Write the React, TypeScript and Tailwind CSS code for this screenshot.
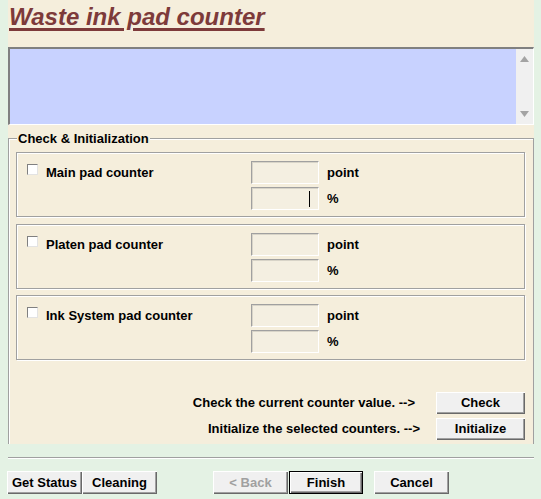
import React from 'react';

const raised =
  'bg-[#f0f0f0] shadow-[inset_1px_1px_0_#ffffff,inset_-1px_-1px_0_#696969,inset_-2px_-2px_0_#a0a0a0]';
const etched = 'border border-[#a0a0a0] shadow-[inset_1px_1px_0_#ffffff,1px_1px_0_#ffffff]';

function Field({ caret = false }: { caret?: boolean }) {
  return (
    <div className="w-[68px] h-[23px] bg-[#f4efe1] border border-t-[#a0a0a0] border-l-[#a0a0a0] border-b-[#ffffff] border-r-[#ffffff] shadow-[inset_1px_1px_0_#d8d4c8] flex items-center justify-end pr-[8px]">
      {caret && <span className="w-[1px] h-[16px] bg-black" />}
    </div>
  );
}

function CounterBox({ label, caret = false, className = '' }: { label: string; caret?: boolean; className?: string }) {
  return (
    <div className={`w-[509px] h-[65px] ${etched} flex pt-[8px] pl-[10px] ${className}`}>
      <div className="w-[224px] flex items-start">
        <span className="mt-[3px] w-[11px] h-[11px] bg-white border border-t-[#808080] border-l-[#808080] border-b-[#e3e3e3] border-r-[#e3e3e3]" />
        <span className="ml-[8px] mt-[4px] text-[13px] leading-[15px] font-bold">{label}</span>
      </div>
      <div className="flex flex-col gap-[3px]">
        <div className="flex items-center">
          <Field />
          <span className="ml-[8px] text-[13px] font-bold">point</span>
        </div>
        <div className="flex items-center">
          <Field caret={caret} />
          <span className="ml-[8px] text-[13px] font-bold">%</span>
        </div>
      </div>
    </div>
  );
}

export default function App() {
  return (
    <div className="w-[541px] h-[499px] bg-[#e4f2e4] font-['Liberation_Sans',Arial,sans-serif] text-black overflow-hidden">
      <div className="ml-[8px] w-[526px] h-[444px] bg-[#f5eedc] flex flex-col">
        <div className="h-[47px] pt-[3px]">
          <h1 className="pl-[1px] text-[24px] leading-[28px] font-bold italic text-[#7d3a3a] underline decoration-[3px] underline-offset-[3px] inline-block">
            Waste ink pad counter
          </h1>
        </div>

        <div className="h-[78px] flex bg-[#c8d2ff] border-t-2 border-l-2 border-t-[#808080] border-l-[#808080] border-b border-r border-b-white border-r-white">
          <div className="flex-1" />
          <div className="w-[17px] bg-[#f0f0f0] flex flex-col items-center justify-between py-[7px]">
            <svg width="9" height="6" viewBox="0 0 9 6">
              <path d="M4.5 0 L9 6 L0 6 Z" fill="#a3a3a3" />
            </svg>
            <svg width="9" height="6" viewBox="0 0 9 6">
              <path d="M0 0 L9 0 L4.5 6 Z" fill="#a3a3a3" />
            </svg>
          </div>
        </div>

        <section className="relative mt-[13px] flex-1 border border-b-0 border-[#a0a0a0] shadow-[inset_1px_1px_0_#ffffff] px-[7px] pt-[13px]">
          <span className="absolute left-[8px] top-[-8px] bg-[#f5eedc] px-[1px] text-[13px] leading-[15px] font-bold">
            Check &amp; Initialization
          </span>
          <div className="flex flex-col">
            <CounterBox label="Main pad counter" caret />
            <CounterBox label="Platen pad counter" className="mt-[7px]" />
            <CounterBox label="Ink System pad counter" className="mt-[6px]" />
          </div>
          <div className="mt-[32px] flex flex-col items-end gap-[4px] pr-[1px]">
            <div className="flex items-center">
              <span className="text-[13px] font-bold">Check the current counter value. --&gt;</span>
              <button className={`ml-[21px] w-[89px] h-[22px] ${raised} text-[13px] font-bold`}>Check</button>
            </div>
            <div className="flex items-center">
              <span className="text-[13px] font-bold">Initialize the selected counters. --&gt;</span>
              <button className={`ml-[16px] w-[89px] h-[22px] ${raised} text-[13px] font-bold`}>Initialize</button>
            </div>
          </div>
        </section>
      </div>

      <div className="mt-[13px] ml-[8px] w-[526px] h-[2px] border-t border-t-[#a0a0a0] border-b border-b-white" />

      <div className="mt-[12px] ml-[7px] flex">
        <button className={`w-[75px] h-[23px] ${raised} text-[13px] font-bold`}>Get Status</button>
        <button className={`w-[75px] h-[23px] ${raised} text-[13px] font-bold`}>Cleaning</button>
        <button className={`ml-[56px] w-[75px] h-[23px] ${raised} text-[13px] font-bold text-[#a0a0a0]`} disabled>
          &lt; Back
        </button>
        <button className="ml-[1px] w-[74px] h-[23px] border border-black bg-[#f0f0f0] shadow-[inset_1px_1px_0_#ffffff,inset_-1px_-1px_0_#696969,inset_-2px_-2px_0_#a0a0a0] text-[13px] font-bold">
          Finish
        </button>
        <button className={`ml-[11px] w-[75px] h-[23px] ${raised} text-[13px] font-bold`}>Cancel</button>
      </div>
    </div>
  );
}
